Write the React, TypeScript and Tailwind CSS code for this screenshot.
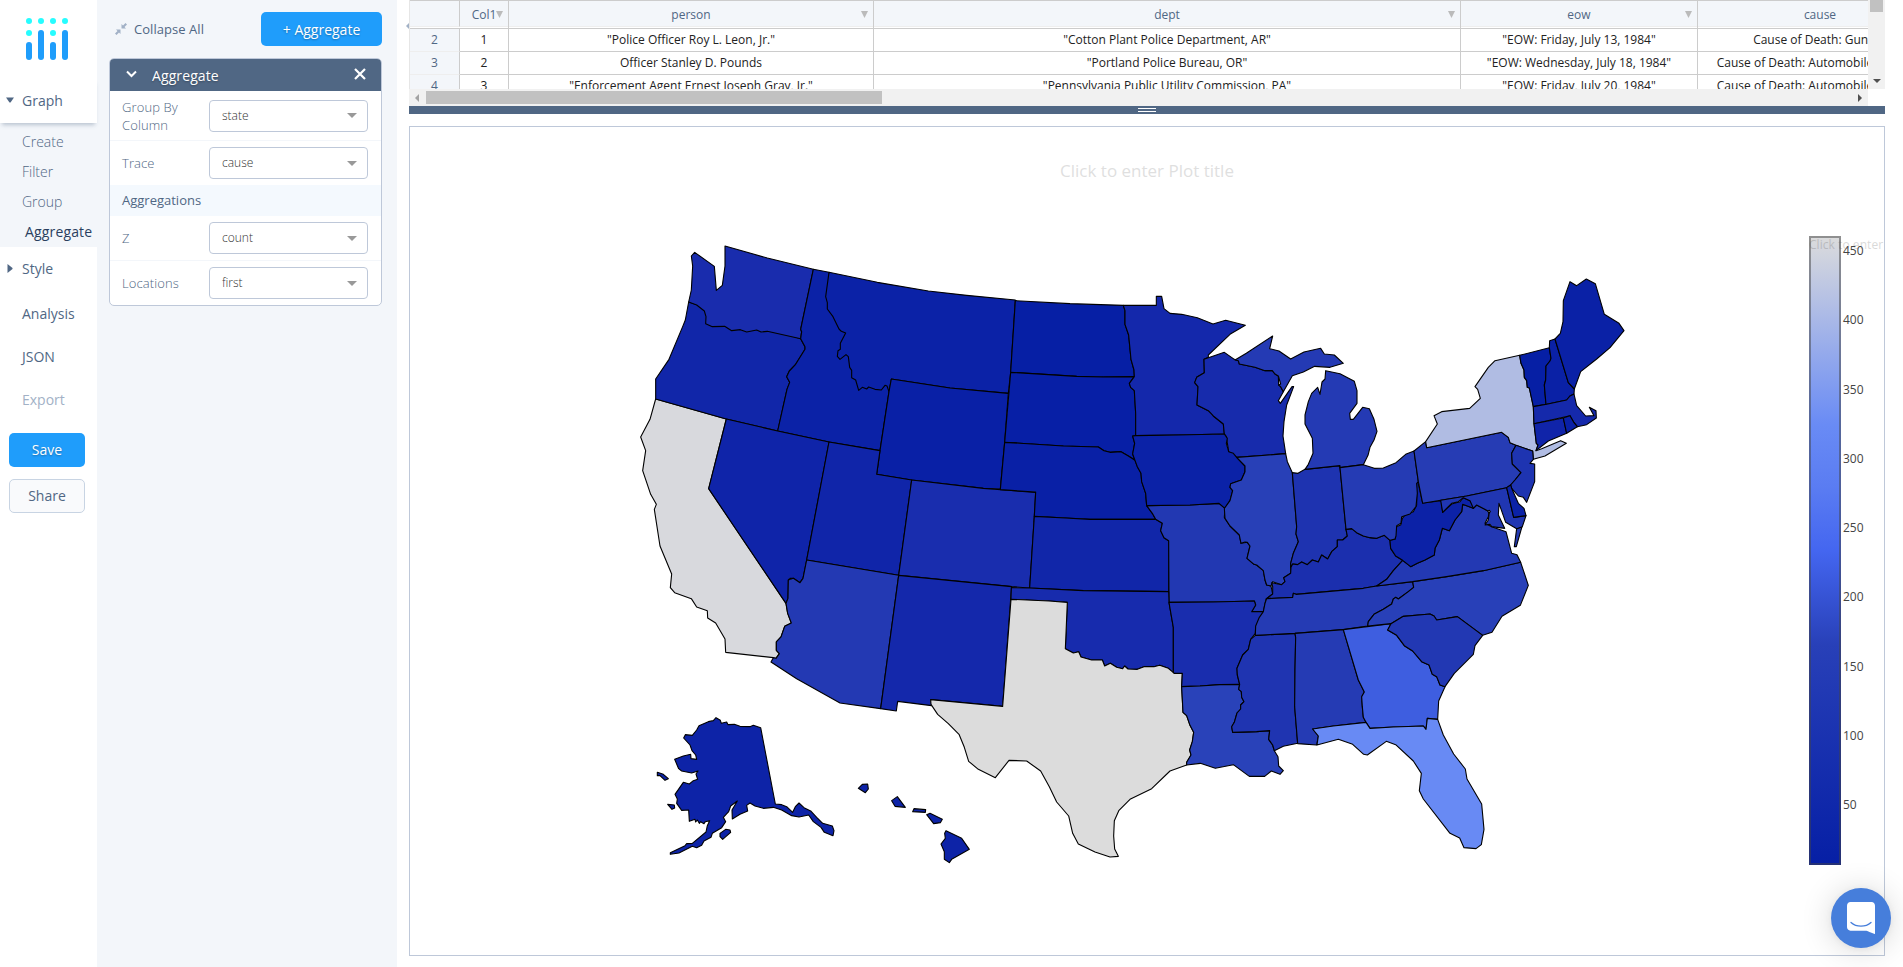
import React from "react";

type Region = { x: number; y: number; states: [string, string, string][] };

/* Outlines are stored at three units per pixel, relative to the origin of their region. */
const regions: Region[] = [
  {
    x: 630,
    y: 230,
    states: [
      ["CA", "#d8d9dd", "M77 507L60 568 32 621 47 662 38 722 62 793 79 823 73 838 90 948 125 1032 121 1073 134 1088 184 1106 200 1131 232 1142 233 1164 257 1179 285 1227 287 1267 430 1283 438 1285 448 1271 439 1261 439 1236 453 1221 464 1189 484 1179 473 1150 468 1120 236 776 289 567Z"],
      ["OR", "#1126a9", "M176 216L166 270 158 290 117 388 77 447 77 507 289 567 443 603 471 478 479 457 470 440 478 423 497 403 525 358 525 350 512 326Z"],
      ["WA", "#192cad", "M184 78L194 67 253 109 259 181 277 166 285 108 285 48 412 84 550 118 512 298 515 305 512 326 412 304 393 306 380 300 350 306 331 299 305 302 284 289 247 290 227 281 228 260 223 243 200 225 176 216 184 180 188 108Z"],
      ["MT", "#0b22a7", "M597 127L742 157 895 183 1010 196 1156 210 1142 427 1135 490 960 474 784 447 777 485 700 520 600 400 560 250Z"],
      ["ID", "#0b22a7", "M550 118L597 127 587 200 592 218 592 237 609 260 627 297 634 304 647 309 631 340 631 358 624 362 622 379 630 388 648 374 655 380 659 412 665 421 665 443 677 450 686 481 697 472 710 477 716 471 735 478 754 480 765 466 771 468 777 485 750 662 597 636 443 603 471 478 479 457 470 440 478 423 497 403 525 358 525 350 512 326 515 305 512 298Z"],
      ["WY", "#0920a6", "M784 447L960 474 1135 490 1124 637 1111 777 1060 775 845 750 740 733 750 662 777 485Z"],
      ["NV", "#0f24a9", "M289 567L443 603 597 636 530 990 519 1045 510 1058 490 1045 480 1045 475 1050 474 1105 468 1120 236 776Z"],
      ["UT", "#1025a9", "M597 636L750 662 740 733 845 750 806 1036 530 990Z"],
      ["CO", "#192dae", "M845 750L1060 775 1217 787 1213 858 1199 1074 1145 1070 806 1036Z"],
    ],
  },
  {
    x: 630,
    y: 480,
    states: [
      ["AZ", "#2339b3", "M530 240L806 286 752 686 630 669 500 596 423 546 430 533 438 535 448 521 439 511 439 486 453 471 464 439 484 429 473 400 468 370 474 355 475 300 490 295 510 308 519 295Z"],
      ["NM", "#1428ab", "M806 286L1145 320 1142 357 1118 679 902 659 905 677 803 664 799 693 752 686Z"],
      ["AK", "#0d23a7", "M258 713L271 721 274 730 290 726 294 734 313 733 330 739 360 740 370 736 392 743 436 972 455 974 470 980 488 997 496 980 507 969 522 983 542 993 560 1012 578 1030 607 1038 612 1052 609 1067 583 1057 573 1042 550 1025 536 1005 507 1011 485 1007 455 990 430 982 400 985 375 978 360 969 350 976 353 993 330 1003 307 1017 306 990 318 970 322 963 302 978 296 995 280 1012 287 1025 275 1043 247 1060 243 1072 222 1083 215 1096 200 1103 187 1099 147 1119 121 1123 121 1118 165 1097 170 1091 187 1090 228 1056 232 1037 239 1022 226 1025 222 1031 212 1025 208 1030 202 1020 197 1026 195 1018 178 1024 176 990 155 991 140 970 142 957 135 943 160 907 178 912 190 902 203 898 198 882 204 873 185 879 155 873 146 866 134 838 160 828 182 823 183 836 200 838 197 825 186 812 180 795 161 774 166 764 187 766 200 750 207 737 235 725 250 722ZM82 877L100 883 115 896 105 901 90 887 82 887ZM113 973L133 975 134 984 126 988ZM270 1060L287 1048 300 1050 302 1057 278 1078 270 1070Z"],
      ["HI", "#0d23a7", "M685 925L697 913 713 912 715 927 706 938ZM785 962L802 950 826 982 795 979ZM852 986L887 989 886 997 848 995ZM890 1004L900 1000 937 1018 931 1028 911 1031ZM944 1060L948 1052 995 1075 1018 1108 965 1138 958 1148 943 1138 943 1115 933 1092 946 1075Z"],
    ],
  },
  {
    x: 1000,
    y: 280,
    states: [
      ["ND", "#061fa5", "M46 62L210 71 370 76 375 92 375 133 386 165 393 238 402 270 403 290 310 291 230 289 32 277Z"],
      ["SD", "#071fa6", "M32 277L230 289 310 291 403 290 388 310 392 322 403 332 407 400 407 467 398 468 404 490 398 522 405 541 385 528 363 515 330 517 312 512 295 501 190 498 14 487Z"],
      ["NE", "#0920a6", "M14 487L190 498 295 501 312 512 330 517 363 515 385 528 405 541 412 560 423 580 425 605 437 640 440 677 457 700 467 718 270 718 196 714 103 709 107 636 1 629Z"],
      ["KS", "#1126a9", "M103 709L196 714 270 718 467 718 487 730 482 752 492 773 506 782 506 935 250 932 89 924Z"],
      ["MN", "#1428ab", "M370 76L469 76 469 49 485 49 492 86 510 100 545 103 592 113 639 132 677 121 736 136 690 163 625 225 625 232 612 238 613 278 590 292 584 308 594 320 591 375 625 392 635 400 640 408 670 432 673 462 535 465 407 467 407 400 403 332 392 322 388 310 403 290 402 270 393 238 386 165 375 133 375 92Z"],
      ["WI", "#172bac", "M612 238L673 217 703 238 715 242 718 252 765 262 795 272 817 272 825 282 835 288 836 315 842 320 850 335 835 362 841 370 876 320 881 320 860 375 852 425 849 468 857 521 710 532 686 515 679 470 673 462 670 432 640 408 625 392 591 375 594 320 584 308 590 292 613 278Z"],
      ["MI-N", "#243ab4", "M705 240L739 220 818 168 809 206 837 213 872 237 912 216 962 205 973 222 1003 225 1030 250 990 262 944 259 910 276 877 287 850 335 842 320 836 315 842 312 835 288 825 282 817 272 795 272 765 262 718 252 715 242Z"],
      ["MO", "#2238b2", "M440 677L570 675 657 670 675 685 673 712 690 738 718 765 723 790 742 787 750 798 741 835 762 853 770 855 790 872 795 900 800 915 813 918 818 942 798 957 790 995 755 995 767 975 763 963 640 966 507 967 506 782 492 773 482 752 487 730 467 718 457 700Z"],
      ["IA", "#0b22a7", "M407 467L535 465 673 462 682 475 679 490 686 515 700 520 710 532 735 558 735 575 724 600 692 611 690 622 698 632 690 662 675 685 657 670 570 675 440 677 437 640 425 605 423 580 412 560 405 541 398 522 404 490 398 468Z"],
      ["IL", "#2840b7", "M710 532L857 521 862 545 877 578 890 740 888 762 895 785 880 820 872 850 872 880 851 893 855 905 845 914 818 905 813 918 800 915 795 900 790 872 770 855 762 853 741 835 750 798 742 787 735 786 723 790 718 765 690 738 675 715 673 685 690 662 698 632 690 622 692 611 724 600 735 575 735 558Z"],
    ],
  },
  {
    x: 1000,
    y: 560,
    states: [
      ["OK", "#172bad", "M34 83L89 84 250 92 506 95 507 127 520 202 520 338 505 325 479 316 462 320 432 320 412 328 384 327 374 318 368 326 350 322 331 310 314 318 307 300 275 300 243 291 236 275 220 279 196 266 202 127 147 123 33 118Z"],
      ["TX", "#dcdcdc", "M33 118L147 123 202 127 196 266 220 279 236 275 243 291 275 300 307 300 314 318 331 310 350 322 368 326 374 318 384 327 412 328 432 320 462 320 479 316 505 325 523 340 547 340 545 380 549 457 560 467 570 496 581 517 577 545 569 570 573 585 560 607 560 615 510 633 455 686 390 718 357 751 343 782 341 828 344 867 355 889 330 891 285 876 235 852 218 820 206 768 170 726 148 680 122 633 80 603 27 601 -14 653 -65 628 -94 604 -107 562 -123 523 -155 491 -187 463 -207 433 -208 419 8 439Z"],
      ["AR", "#192dae", "M507 127L640 126 763 123 767 135 755 155 790 155 785 168 777 178 774 195 767 200 766 220 752 238 745 268 728 285 711 325 712 345 719 373 660 374 600 378 545 380 547 340 523 340 520 338 520 202Z"],
      ["LA", "#2942b9", "M545 380L600 378 660 374 719 373 716 388 724 395 725 412 732 425 722 435 722 447 711 459 703 487 695 500 698 517 770 515 809 512 806 538 818 555 823 572 834 590 836 618 850 632 840 643 814 633 794 649 748 649 700 614 646 625 601 610 560 615 560 607 573 585 569 570 577 545 581 517 570 496 560 467 549 457Z"],
      ["MS", "#1f34b1", "M766 226L885 220 887 232 885 330 884 440 893 550 850 559 823 572 818 555 806 538 809 512 770 515 698 517 695 500 703 487 711 459 722 447 722 435 732 425 725 412 724 395 716 388 719 373 712 345 711 325 728 285 745 268 752 238Z"],
    ],
  },
  {
    x: 1250,
    y: 480,
    states: [
      ["IN", "#1e33b0", "M127 -22L144 -20 165 -32 268 -43 270 -37 288 148 292 168 278 180 262 180 262 200 245 215 233 237 215 225 205 246 187 240 172 254 155 246 143 254 128 252 122 262 122 250 130 220 145 185 138 162 140 140Z"],
      ["KY", "#1b2fae", "M50 356L68 342 68 320 65 308 95 314 105 305 101 293 122 280 123 262 128 252 143 254 155 246 172 254 187 240 205 246 215 225 233 237 245 215 262 200 262 180 278 180 292 168 288 148 305 146 320 158 340 168 360 173 380 175 403 166 420 181 422 205 437 228 458 241 430 272 410 298 380 318 340 325 138 343 130 340 128 352Z"],
      ["TN", "#253bb4", "M50 356L128 352 130 340 138 343 340 325 380 318 488 305 491 322 475 335 445 357 437 352 430 357 425 372 400 388 372 403 355 425 353 438 280 449 135 460 16 466 17 438 28 412 40 395 45 370Z"],
      ["AL", "#253bb4", "M135 460L280 449 325 600 343 636 335 650 337 680 340 712 348 727 250 738 188 747 205 768 200 795 143 791 134 680 135 570 137 472Z"],
      ["GA", "#3e5ee0", "M280 449L423 431 413 450 440 466 463 497 488 513 515 545 537 555 547 583 560 590 570 615 585 620 566 663 563 718 532 715 528 748 520 738 430 741 360 745 348 727 340 712 337 680 335 650 343 636 325 600Z"],
      ["FL", "#688af4", "M188 747L250 738 348 727 360 745 430 741 520 738 528 748 532 715 563 718 580 765 611 822 646 867 651 897 695 972 702 1048 694 1094 678 1106 642 1103 629 1074 600 1060 520 957 508 932 514 880 490 843 437 794 409 784 352 825 341 823 308 793 265 778 201 795 205 768Z"],
      ["NC", "#2840b8", "M488 305L590 290 700 272 812 247 835 316 811 376 756 409 726 457 698 466 622 410 560 420 552 408 540 402 460 409 423 431 353 438 355 425 372 403 400 388 425 372 430 357 437 352 445 357 475 335 491 322Z"],
      ["SC", "#2238b3", "M423 431L460 409 540 402 552 408 560 420 622 410 698 466 675 497 670 523 613 580 585 620 570 615 560 590 547 583 537 555 515 545 488 513 463 497 440 466 413 450Z"],
      ["VA", "#2339b3", "M380 318L410 298 430 272 458 241 482 260 502 250 525 240 553 225 555 205 568 180 577 145 598 152 615 120 635 95 638 73 670 85 680 75 690 80 718 95 715 110 705 130 725 140 768 155 785 220 801 224 812 247 700 272 590 290 488 305 380 318ZM800 146L816 140 799 200 793 200Z"],
      ["WV", "#0c22a7", "M503 5L507 20 518 69 574 62 578 97 605 72 630 65 640 53 660 62 670 75 670 85 638 73 635 95 615 120 598 152 577 145 568 180 555 205 553 225 525 240 502 250 482 260 458 241 437 228 422 205 420 181 435 178 438 140 452 135 457 115 465 105 490 95 500 75 500 40 498 10Z"],
    ],
  },
  {
    x: 1300,
    y: 260,
    states: [
      ["MI-S", "#243ab4", "M15 628L120 617 120 623 190 614 204 586 210 562 222 540 231 514 222 478 208 446 188 442 160 478 151 478 149 460 171 430 171 392 163 364 120 341 77 332 75 357 66 366 60 403 53 382 35 400 25 425 15 465 15 492 37 535 39 580 25 613Z"],
      ["OH", "#253bb4", "M120 623L190 614 223 625 250 624 288 608 317 583 342 573 355 665 350 670 352 700 348 740 330 762 305 770 303 790 290 797 288 828 285 837 270 841 253 826 230 835 210 833 190 828 170 818 155 806 138 808Z"],
      ["PA", "#263cb4", "M342 573L377 545 380 563 605 517 625 532 630 548 648 556 635 580 637 612 663 638 645 660 632 675 620 683 500 708 422 721 368 730 355 665Z"],
      ["NY", "#b0bce3", "M377 545L412 492 402 467 425 455 509 445 541 415 533 388 525 380 565 322 585 302 659 286 663 310 672 330 673 352 680 362 682 382 688 384 700 440 702 490 709 550 714 555 708 572 725 566 782 542 799 550 735 588 700 598 698 573 648 556 630 548 625 532 605 517 380 563Z"],
      ["VT", "#061fa5", "M659 286L748 263 753 295 750 303 738 318 737 360 733 375 738 433 700 440 688 384 682 382 680 362 673 352 672 330 663 310Z"],
      ["NH", "#0a21a6", "M748 263L749 242 765 237 805 368 823 387 822 402 810 408 800 420 740 433 738 433 733 375 737 360 738 318 750 303 753 295Z"],
      ["ME", "#0a21a6", "M765 237L781 220 789 185 790 122 810 65 830 77 859 57 886 71 913 163 957 190 972 212 930 263 890 297 842 335 823 387 805 368Z"],
      ["MA", "#1529ab", "M700 440L740 433 800 420 810 408 822 402 830 437 857 468 882 467 868 442 888 452 889 474 860 494 832 500 822 488 810 467 702 491Z"],
      ["CT", "#1024a9", "M702 491L790 474 800 520 745 543 708 572 714 555 709 550Z"],
      ["RI", "#0920a6", "M790 474L810 467 822 488 832 500 800 520Z"],
      ["MD", "#2036b2", "M422 721L500 708 620 683 641 772 678 767 667 800 650 806 617 787 597 730 595 765 614 805 575 800 570 793 555 795 565 780 568 755 540 740 530 735 520 745 510 722 490 713 475 725 455 730 428 757Z"],
      ["NJ", "#1e34b1", "M648 556L698 573 700 598 690 610 704 612 704 665 680 727 670 712 655 708 635 685 632 675 645 660 663 638 637 612 635 580Z"],
      ["DE", "#0b22a7", "M620 683L632 675 635 685 655 730 672 745 678 767 641 772Z"],
      ["DC", "#ffffff", "M563 753L568 751 571 755 567 759Z"],
    ],
  },
];

function UsMap() {
  return (
    <svg className="absolute left-[220px] top-[103px]" width="1030" height="650" viewBox="630 230 1030 650">
      {regions.map((r) => (
        <g key={`${r.x}-${r.y}`} transform={`translate(${r.x} ${r.y}) scale(0.33333)`} stroke="#000" strokeWidth="3.3" strokeLinejoin="round">
          {r.states.map(([id, fill, d]) => (
            <path key={id} d={d} fill={fill} />
          ))}
        </g>
      ))}
    </svg>
  );
}

function Logo() {
  const cols = [42, 30, 42, 30];
  return (
    <svg className="ml-[26px] mt-[18px] h-[42px] w-[42px] shrink-0" viewBox="0 0 42 42">
      {cols.map((h, i) => {
        const x = i * 12;
        const tall = h === 30;
        return (
          <g key={i}>
            <circle cx={x + 3} cy="3" r="3" fill="#26fcff" />
            {!tall && <circle cx={x + 3} cy="15" r="3" fill="#26fcff" />}
            <rect x={x} y={tall ? 12 : 24} width="6" height={tall ? 30 : 18} rx="3" fill="#1f9dfb" />
          </g>
        );
      })}
    </svg>
  );
}

function Sidebar() {
  return (
    <nav className="flex h-full w-[97px] shrink-0 flex-col bg-white text-[14px] text-[#506784]">
      <Logo />
      <div className="relative z-10 mt-[18px] flex h-[45px] items-center bg-white pb-[1px] shadow-[0_4px_4px_-2px_rgba(80,103,132,0.35)]">
        <svg className="ml-[6px] mr-[8px]" width="8" height="6" viewBox="0 0 8 6"><path d="M0 .5h8L4.500 5.500h-1z" fill="#506784" /></svg>
        Graph
      </div>
      <div className="flex h-[124px] flex-col bg-[#f3f6fa] pt-[4px]">
        {["Create", "Filter", "Group"].map((t) => (
          <div key={t} className="h-[30px] pl-[22px] font-light leading-[30px]">{t}</div>
        ))}
        <div className="h-[30px] pl-[25px] font-medium leading-[30px] tracking-[0.15px] text-[#2a3f5f]">Aggregate</div>
      </div>
      <div className="flex h-[44px] items-center pb-[2px]">
        <svg className="ml-[7px] mr-[9px]" width="6" height="9" viewBox="0 0 6 9"><path d="M.5 0L5.500 4v1L.5 9z" fill="#506784" /></svg>
        Style
      </div>
      <div className="h-[44px] pl-[22px] leading-[46px]">Analysis</div>
      <div className="h-[43px] pl-[22px] leading-[44px]">JSON</div>
      <div className="h-[43px] pl-[22px] leading-[43px] text-[#a2b1c6]">Export</div>
      <button className="ml-[9px] mt-[12px] h-[34px] w-[76px] shrink-0 rounded-[5px] bg-[#1f9dfb] pb-[2px] font-medium text-white [text-shadow:0_1px_2px_rgba(0,0,0,0.3)]">Save</button>
      <button className="ml-[9px] mt-[12px] h-[34px] w-[76px] shrink-0 rounded-[5px] border border-[#c8d4e3] bg-[#f9fafc] pb-[2px] font-medium text-[#506784]">Share</button>
    </nav>
  );
}

function Select({ value }: { value: string }) {
  return (
    <div className="flex h-[32px] w-[159px] shrink-0 items-center justify-between rounded-[4px] border border-[#bec8d9] bg-white pl-[12px] pr-[10px] text-[12px] font-light text-[#333]">
      {value}
      <svg width="10" height="5" viewBox="0 0 10 5"><path d="M0 0h10L5 5z" fill="#999" /></svg>
    </div>
  );
}

function Field({ label, value, className }: { label: string; value: string; className: string }) {
  return (
    <div className={`flex items-center ${className}`}>
      <div className="w-[87px] shrink-0 whitespace-pre-line text-[13px] font-light leading-[18px] tracking-[0.1px] text-[#506784]">{label}</div>
      <Select value={value} />
    </div>
  );
}

function Panel() {
  return (
    <section className="flex h-full w-[300px] shrink-0 flex-col bg-[#f3f6fa] pl-[12px]">
      <div className="mt-[12px] flex h-[34px] w-[273px] items-center">
        <svg className="ml-[6px] mr-[7px]" width="12" height="12" viewBox="0 0 12 12" fill="#a2b1c6">
          <path d="M6.500 5.500V1l1.500 1.500L10.500 0 12 1.500 9.500 4 11 5.500zM5.500 6.500V11L4 9.500 1.500 12 0 10.500 2.500 8 1 6.500z" />
        </svg>
        <span className="pt-px text-[13px] tracking-[0.05px] text-[#506784]">Collapse All</span>
        <button className="ml-auto h-[34px] w-[121px] rounded-[5px] bg-[#1f9dfb] text-[14px] font-medium text-white [text-shadow:0_1px_2px_rgba(0,0,0,0.3)]">+ Aggregate</button>
      </div>
      <div className="mt-[12px] flex h-[248px] w-[273px] flex-col overflow-hidden rounded-[5px] border border-[#bec8d9] bg-white">
        <div className="-mx-px -mt-px flex h-[33px] shrink-0 items-center bg-[#506784] pt-[2px] text-[14px] font-medium text-white">
          <svg className="-mt-[3px] ml-[17px] mr-[15px]" width="11" height="8" viewBox="0 0 11 8"><path d="M1 1.500l4.500 4.500L10 1.500" fill="none" stroke="#fff" strokeWidth="2" /></svg>
          <span className="tracking-[0.1px] [text-shadow:0_1px_2px_rgba(0,0,0,0.3)]">Aggregate</span>
          <svg className="-mt-[4px] ml-auto mr-[16px]" width="12" height="12" viewBox="0 0 12 12"><path d="M1 1l10 10M11 1L1 11" fill="none" stroke="#fff" strokeWidth="2.200" /></svg>
        </div>
        <Field label={"Group By\nColumn"} value="state" className="h-[50px] border-b border-[#f3f6fa] pl-[12px]" />
        <Field label="Trace" value="cause" className="h-[44px] pl-[12px]" />
        <div className="h-[31px] bg-[#f4f9fe] pl-[12px] text-[13px] leading-[30px] text-[#506784]">Aggregations</div>
        <Field label="Z" value="count" className="h-[45px] border-b border-[#f3f6fa] pl-[12px]" />
        <Field label="Locations" value="first" className="h-[44px] pl-[12px]" />
      </div>
    </section>
  );
}

const columns = ["Col1", "person", "dept", "eow", "cause"];
const gridCols = "grid w-[1533px] grid-cols-[50px_49px_365px_587px_237px_245px]";
const rows = [
  ["2", "1", '"Police Officer Roy L. Leon, Jr."', '"Cotton Plant Police Department, AR"', '"EOW: Friday, July 13, 1984"', "Cause of Death: Gunfire"],
  ["3", "2", "Officer Stanley D. Pounds", '"Portland Police Bureau, OR"', '"EOW: Wednesday, July 18, 1984"', "Cause of Death: Automobile accident"],
  ["4", "3", '"Enforcement Agent Ernest Joseph Gray, Jr."', '"Pennsylvania Public Utility Commission, PA"', '"EOW: Friday, July 20, 1984"', "Cause of Death: Automobile accident"],
];

function DataGrid() {
  return (
    <div className="flex h-[106px] w-[1476px]">
      <div className="flex w-[1459px] flex-col">
        <div className="h-[89px] overflow-hidden border-l border-[#e6e6e6] text-[12px] text-[#222]">
          <div className={`${gridCols} h-[29px] border-y border-[#ccc] text-[#506784]`}>
            <div className="h-[26px] border-r border-b border-[#ccc] border-b-[#eee] bg-[#f3f6fa]" />
            {columns.map((c, i) => (
              <div key={c} className="flex h-[27px] border-r border-[#ccc]">
                <div className="relative h-[26px] w-full border-b border-[#eee] bg-[#f3f6fa] text-center leading-[27px]">
                  {c}
                  {i < 4 && <svg className="absolute right-[5px] top-[10px]" width="7" height="7" viewBox="0 0 7 7"><path d="M0 0h7L3.500 7z" fill="#bbb" /></svg>}
                </div>
              </div>
            ))}
          </div>
          {rows.map((row) => (
            <div key={row[0]} className={gridCols}>
              {row.map((cell, i) => (
                <div key={i} className={`h-[23px] border-r border-b border-[#ccc] text-center leading-[22px] whitespace-nowrap ${i === 0 ? "border-b-[#eee] bg-[#f3f6fa] text-[#506784]" : ""}`}>{cell}</div>
              ))}
            </div>
          ))}
        </div>
        <div className="flex h-[17px] items-center justify-between bg-[#f1f1f1]">
          <svg className="ml-[6px]" width="4" height="8" viewBox="0 0 4 8"><path d="M4 0v8L0 4z" fill="#a3a3a3" /></svg>
          <div className="ml-[7px] mr-auto h-[13px] w-[456px] bg-[#c1c1c1]" />
          <svg className="mr-[6px]" width="4" height="8" viewBox="0 0 4 8"><path d="M0 0v8l4-4z" fill="#505050" /></svg>
        </div>
      </div>
      <div className="flex h-[89px] w-[17px] flex-col items-center justify-between bg-[#f1f1f1]">
        <div className="h-[12px] w-[13px] bg-[#c1c1c1]" />
        <svg className="mb-[6px]" width="8" height="4" viewBox="0 0 8 4"><path d="M0 0h8L4 4z" fill="#505050" /></svg>
      </div>
    </div>
  );
}

const ticks = [450, 400, 350, 300, 250, 200, 150, 100, 50];

function Plot() {
  return (
    <div className="relative mt-[12px] h-[830px] w-[1476px] border border-[#bec8d9] bg-white">
      <div className="absolute left-0 top-[32px] w-full text-center text-[17px] leading-[24px] text-[#dfdfdf]">Click to enter Plot title</div>
      <UsMap />
      <div className="absolute left-[1399px] top-[109px] h-[629px] w-[32px] border-2 border-[#444]/50 bg-[linear-gradient(to_top,#061fa5_0%,#2840b8_35%,#4466f0_50%,#5a7cf2_60%,#698bf5_70%,#dcdcdc_100%)] bg-origin-border" />
      <div className="absolute left-[1399px] top-[110px] whitespace-nowrap text-[12px] leading-[16px] tracking-[0.05px] text-[#444] opacity-20">Click to enter</div>
      <div className="absolute left-[1433px] top-[116px] flex flex-col text-[12px] text-[#444]">
        {ticks.map((t) => (
          <div key={t} className="h-[69.300px] leading-[16px]">{t}</div>
        ))}
      </div>
    </div>
  );
}

export default function App() {
  return (
    <div className="relative flex h-[967px] w-[1903px] overflow-hidden bg-white [font-family:'Open_Sans',sans-serif]">
      <Sidebar />
      <Panel />
      <main className="ml-[12px] flex flex-col">
        <DataGrid />
        <div className="flex h-[8px] w-[1476px] flex-col items-center justify-center gap-[2px] bg-[#506784]">
          <div className="h-px w-[18px] bg-white" />
          <div className="h-px w-[18px] bg-white" />
        </div>
        <Plot />
      </main>
      <svg className="absolute left-[406px] top-[23px]" width="3" height="6" viewBox="0 0 3 6"><path d="M3 0v6L0 3z" fill="#a2b1c6" /></svg>
      <div className="absolute left-[1831px] top-[888px] flex h-[60px] w-[60px] items-center justify-center rounded-full bg-[#467edb] shadow-[0_1px_6px_rgba(0,0,0,0.06),0_2px_32px_rgba(0,0,0,0.16)]">
        <svg width="28" height="32" viewBox="0 0 28 32">
          <path d="M28 32s-4.714-1.855-8.527-3.340H3.437C1.540 28.660 0 27.026 0 25.013V3.644C0 1.633 1.540 0 3.437 0h21.125C26.460 0 28 1.633 28 3.644V32z" fill="#fff" />
          <path d="M4 20.500c2.700 2.400 6.200 3.700 10 3.700s7.300-1.300 10-3.700" fill="none" stroke="#467edb" strokeWidth="1.300" strokeLinecap="round" />
        </svg>
      </div>
    </div>
  );
}
